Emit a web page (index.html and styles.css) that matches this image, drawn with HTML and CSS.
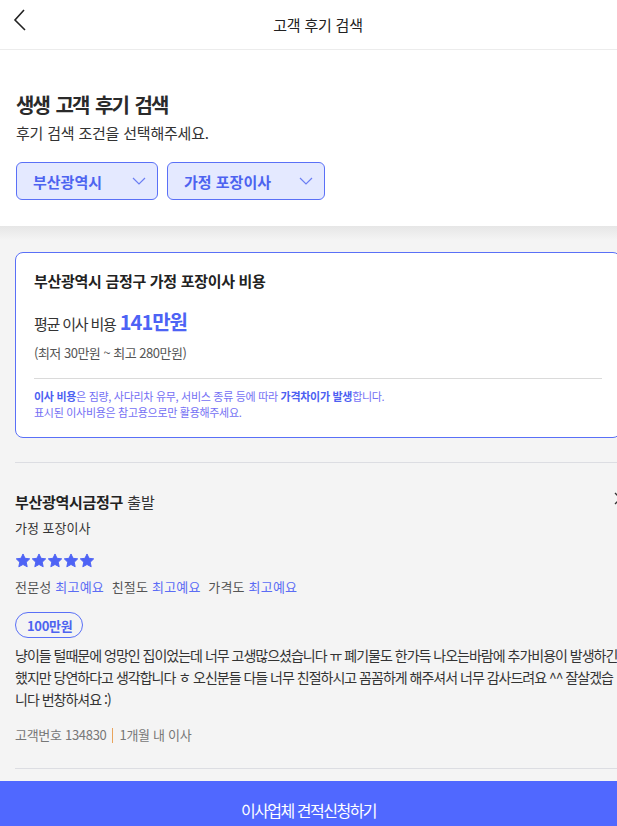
FILE: index.html
```html
<!DOCTYPE html>
<html lang="ko">
<head>
<meta charset="utf-8">
<title>고객 후기 검색</title>
<link rel="stylesheet" href="styles.css">
</head>
<body>
<div class="page">
  <header class="topbar">
    <svg class="back" width="30" height="40" viewBox="0 0 30 40"><polyline points="24,10 15,20 25,30" fill="none" stroke="#222" stroke-width="1.6"/></svg>
    <h1 class="topbar-title">고객 후기 검색</h1>
  </header>

  <section class="search">
    <h2 class="search-title">생생 고객 후기 검색</h2>
    <p class="search-sub">후기 검색 조건을 선택해주세요.</p>
    <div class="selects">
      <div class="select select-city">
        <span>부산광역시</span>
        <svg width="14" height="8" viewBox="0 0 14 8"><polyline points="1,1 7,7 13,1" fill="none" stroke="#6b7ef3" stroke-width="1.2"/></svg>
      </div>
      <div class="select select-type">
        <span>가정 포장이사</span>
        <svg width="14" height="8" viewBox="0 0 14 8"><polyline points="1,1 7,7 13,1" fill="none" stroke="#6b7ef3" stroke-width="1.2"/></svg>
      </div>
    </div>
  </section>

  <section class="list">
    <div class="list-inner">
      <div class="cost-card">
        <h3 class="cost-title">부산광역시 금정구 가정 포장이사 비용</h3>
        <p class="cost-avg"><span class="avg-label">평균 이사 비용</span> <strong>141만원</strong></p>
        <p class="cost-range">(최저 30만원 ~ 최고 280만원)</p>
        <div class="cost-divider"></div>
        <p class="cost-note"><b>이사 비용</b>은 짐량, 사다리차 유무, 서비스 종류 등에 따라 <b>가격차이가 발생</b>합니다.<br>표시된 이사비용은 참고용으로만 활용해주세요.</p>
      </div>

      <div class="divider"></div>

      <article class="review">
        <div class="review-head">
          <p class="review-title"><b>부산광역시금정구</b> 출발</p>
          <svg class="review-arrow" width="10" height="14" viewBox="0 0 10 14"><polyline points="2,1 7.5,6.5 2,12" fill="none" stroke="#333" stroke-width="1.3"/></svg>
        </div>
        <p class="review-type">가정 포장이사</p>
        <div class="stars">
          <svg width="16" height="15" viewBox="0 0 24 23"><path d="M12 1.5l3.1 6.6 7.2.9-5.3 5 1.4 7.1L12 17.6l-6.4 3.5L7 14l-5.3-5 7.2-.9z" fill="#4e63f5" stroke="#4e63f5" stroke-width="1.5" stroke-linejoin="round"/></svg>
          <svg width="16" height="15" viewBox="0 0 24 23"><path d="M12 1.5l3.1 6.6 7.2.9-5.3 5 1.4 7.1L12 17.6l-6.4 3.5L7 14l-5.3-5 7.2-.9z" fill="#4e63f5" stroke="#4e63f5" stroke-width="1.5" stroke-linejoin="round"/></svg>
          <svg width="16" height="15" viewBox="0 0 24 23"><path d="M12 1.5l3.1 6.6 7.2.9-5.3 5 1.4 7.1L12 17.6l-6.4 3.5L7 14l-5.3-5 7.2-.9z" fill="#4e63f5" stroke="#4e63f5" stroke-width="1.5" stroke-linejoin="round"/></svg>
          <svg width="16" height="15" viewBox="0 0 24 23"><path d="M12 1.5l3.1 6.6 7.2.9-5.3 5 1.4 7.1L12 17.6l-6.4 3.5L7 14l-5.3-5 7.2-.9z" fill="#4e63f5" stroke="#4e63f5" stroke-width="1.5" stroke-linejoin="round"/></svg>
          <svg width="16" height="15" viewBox="0 0 24 23"><path d="M12 1.5l3.1 6.6 7.2.9-5.3 5 1.4 7.1L12 17.6l-6.4 3.5L7 14l-5.3-5 7.2-.9z" fill="#4e63f5" stroke="#4e63f5" stroke-width="1.5" stroke-linejoin="round"/></svg>
        </div>
        <p class="ratings">전문성 <em>최고예요</em>&nbsp; 친절도 <em>최고예요</em>&nbsp; 가격도 <em>최고예요</em></p>
        <span class="price-pill">100만원</span>
        <p class="review-text">냥이들 털때문에 엉망인 집이었는데 너무 고생많으셨습니다 ㅠ 폐기물도 한가득 나오는바람에 추가비용이 발생하긴했지만 당연하다고 생각합니다 ㅎ 오신분들 다들 너무 친절하시고 꼼꼼하게 해주셔서 너무 감사드려요 ^^ 잘살겠습니다 번창하셔요 :)</p>
        <p class="meta">고객번호 134830 <span class="sep"></span> 1개월 내 이사</p>
      </article>

      <div class="divider divider-bottom"></div>
    </div>
    <button class="cta" type="button">이사업체 견적신청하기</button>
  </section>
</div>
</body>
</html>
```

FILE: styles.css
```css
html, body {
  margin: 0;
  padding: 0;
  overflow-x: hidden;
}
body {
  font-family: "Noto Sans CJK KR", "Noto Sans", sans-serif;
  color: #222;
  background: #f4f4f4;
}
p, h1, h2, h3 { margin: 0; }

.page {
  width: 617px;
  overflow: hidden;
}

.topbar {
  height: 49px;
  border-bottom: 1px solid #ececec;
  background: #fff;
  display: flex;
  align-items: center;
  justify-content: center;
  position: relative;
}
.back {
  position: absolute;
  left: 0;
  top: 0;
}
.topbar-title {
  font-size: 15px;
  font-weight: 400;
  color: #222;
  line-height: 22px;
  margin-top: 1px;
  padding-left: 19px;
  letter-spacing: -0.2px;
}

.search {
  background: #fff;
  padding: 41px 16px 26px;
}
.search-title {
  font-size: 20px;
  font-weight: 700;
  line-height: 28px;
  color: #2a2a2a;
  letter-spacing: -1.8px;
  word-spacing: 2.5px;
}
.search-sub {
  margin-top: 3px;
  font-size: 15px;
  line-height: 22px;
  color: #333;
  letter-spacing: -0.2px;
}
.selects {
  margin-top: 18px;
  display: flex;
  gap: 9px;
}
.select {
  height: 36px;
  border: 1px solid #5a70f7;
  border-radius: 6px;
  background: #e4e9ff;
  display: flex;
  align-items: center;
  justify-content: space-between;
  padding: 0 11px 0 16px;
  font-size: 15px;
  font-weight: 700;
  color: #4d63f0;
}
.select-city { width: 113px; }
.select-type { width: 129px; }

.list {
  background: linear-gradient(#e6e6e6, #f4f4f4 14px);
  width: 636px;
}
.list-inner {
  padding: 26px 15px 0;
}

.cost-card {
  background: #fff;
  border: 1px solid #5a70f7;
  border-radius: 8px;
  padding: 17px 18px 17px;
}
.cost-title {
  font-size: 15px;
  font-weight: 700;
  line-height: 22px;
  color: #222;
  letter-spacing: -0.3px;
}
.cost-avg {
  margin-top: 16px;
  font-size: 15px;
  line-height: 28px;
  color: #333;
}
.avg-label {
  letter-spacing: -1.2px;
}
.cost-avg strong {
  font-size: 20px;
  color: #4d63f5;
  font-weight: 700;
  letter-spacing: -1px;
}
.cost-range {
  margin-top: 5px;
  font-size: 13px;
  line-height: 20px;
  color: #555;
  letter-spacing: -0.5px;
}
.cost-divider {
  margin-top: 15px;
  height: 1px;
  background: #dadada;
}
.cost-note {
  margin-top: 9px;
  font-size: 11px;
  line-height: 16px;
  color: #7470f4;
  letter-spacing: -0.3px;
}
.cost-note b {
  color: #4d5ff2;
  font-weight: 700;
}

.divider {
  height: 1px;
  background: #dcdde2;
  margin-top: 24px;
}

.review {
  padding-top: 28px;
}
.review-head {
  display: flex;
  align-items: flex-start;
  justify-content: space-between;
  height: 22px;
}
.review-title {
  font-size: 15px;
  line-height: 22px;
  color: #333;
}
.review-title b {
  color: #222;
  letter-spacing: -0.3px;
}
.review-arrow {
  margin-right: -2px;
  margin-top: 1px;
}
.review-type {
  margin-top: 5px;
  font-size: 13px;
  line-height: 20px;
  color: #333;
}
.stars {
  margin-top: 14px;
  display: flex;
  height: 16px;
  align-items: center;
}
.stars svg { display: block; }
.ratings {
  margin-top: 9px;
  font-size: 13px;
  line-height: 20px;
  color: #555;
  letter-spacing: 0.2px;
}
.ratings em {
  font-style: normal;
  color: #5b6cf5;
}
.price-pill {
  display: inline-flex;
  align-items: center;
  margin-top: 15px;
  height: 24px;
  padding: 0 10px 0 11px;
  border: 1px solid #5a70f7;
  border-radius: 13px;
  font-size: 13px;
  font-weight: 700;
  color: #4d63f0;
  letter-spacing: -0.3px;
}
.review-text {
  margin-top: 6px;
  font-size: 14px;
  line-height: 22px;
  color: #333;
  word-break: break-all;
  letter-spacing: -1px;
}
.meta {
  margin-top: 15px;
  font-size: 13px;
  line-height: 20px;
  color: #777;
  display: flex;
  align-items: center;
  letter-spacing: -0.3px;
}
.sep {
  display: inline-block;
  width: 1px;
  height: 15px;
  background: #e9a45c;
  margin: 0 6px;
}
.divider-bottom {
  margin-top: 23px;
}

.cta {
  display: block;
  width: 617px;
  height: 58px;
  margin-top: 12px;
  border: 0;
  background: #5068ff;
  color: #fff;
  font-family: "Noto Sans CJK KR", "Noto Sans", sans-serif;
  font-size: 16px;
  letter-spacing: -1.5px;
  padding: 0;
}
```
